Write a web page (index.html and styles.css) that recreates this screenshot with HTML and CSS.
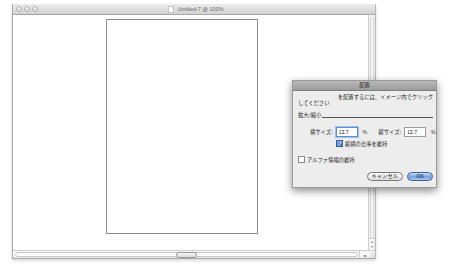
FILE: index.html
```html
<!DOCTYPE html>
<html>
<head>
  <meta charset="utf-8">
  <link rel="stylesheet" href="styles.css">
</head>

<body>
  <div class="window">
    <div class="titlebar">
      <div class="lights">
        <span class="light"></span>
        <span class="light"></span>
        <span class="light"></span>
      </div>
      <div class="title"><span class="doc"></span>Untitled-7 @ 100%</div>
    </div>
    <div class="content">
      <div class="canvas">
        <div class="page"></div>
      </div>
      <div class="vscroll">
        <div class="vtrack"></div>
        <div class="varrows"><span>▴</span><span>▾</span></div>
      </div>
    </div>
    <div class="hscroll">
      <div class="htrack"><div class="thumb"></div></div>
      <div class="harrows"><span>◂</span><span>▸</span></div>
      <div class="grow"></div>
    </div>
  </div>

  <div class="dialog">
    <div class="dlg-title">配置</div>
    <div class="dlg-body">
      <div class="msg-right">を配置するには、イメージ内でクリック</div>
      <div class="msg-left">してください</div>
      <div class="group">
        <span>拡大/縮小</span>
        <span class="rule"></span>
      </div>
      <div class="sizes">
        <label>横サイズ:</label>
        <span class="field focus">12.7</span>
        <span class="pct">%</span>
        <label class="second">縦サイズ:</label>
        <span class="field">12.7</span>
        <span class="pct">%</span>
      </div>
      <div class="check keep"><span class="box checked">✓</span>縦横の比率を維持</div>
      <div class="check"><span class="box"></span>アルファ情報の維持</div>
      <div class="buttons">
        <button class="btn">キャンセル</button>
        <button class="btn ok">OK</button>
      </div>
    </div>
  </div>
</body>
</html>
```

FILE: styles.css
```css
body {
  margin: 0;
  background: #fff;
  font-family: "Noto Sans CJK JP", "Noto Sans", sans-serif;
  width: 454px;
  height: 266px;
  position: relative;
  overflow: hidden;
}

.window {
  margin: 4px 0 0 12px;
  width: 364px;
  height: 255px;
  display: flex;
  flex-direction: column;
  border-left: 1px solid #a8a8a8;
  border-right: 1px solid #b8b8b8;
  border-bottom: 1px solid #a8a8a8;
  box-sizing: border-box;
  box-shadow: 0 2px 3px rgba(0, 0, 0, 0.15);
}

.titlebar {
  height: 10px;
  flex: none;
  position: relative;
  background: linear-gradient(#ececec, #d2d2d2);
  border-bottom: 1px solid #a8a8a8;
  display: flex;
  align-items: center;
  justify-content: center;
}

.lights {
  position: absolute;
  left: 3px;
  top: 2px;
  display: flex;
  gap: 2px;
}

.light {
  width: 4px;
  height: 4px;
  border-radius: 50%;
  border: 1px solid #b4b4b4;
  background: linear-gradient(#f6f6f6, #dadada);
}

.title {
  font-family: "Liberation Sans", sans-serif;
  font-size: 5.5px;
  color: #666;
  display: flex;
  align-items: center;
  gap: 3px;
  margin-left: 4px;
}

.doc {
  width: 4px;
  height: 5px;
  background: #fff;
  border: 1px solid #c4c4c4;
}

.content {
  flex: 1;
  display: flex;
  min-height: 0;
}

.canvas {
  flex: 1;
  background: #fff;
  padding: 4px 0 0 93px;
}

.page {
  width: 150px;
  height: 213px;
  border: 1px solid #8a8a8a;
  background: #fff;
}

.vscroll {
  width: 6px;
  display: flex;
  flex-direction: column;
  border-left: 1px solid #cfcfcf;
  background: linear-gradient(to right, #eee, #fff, #e6e6e6);
}

.vtrack {
  flex: 1;
  margin: 2px 1px 0;
  border-radius: 3px;
  border: 1px solid #d8d8d8;
  background: linear-gradient(to right, #f0f0f0, #fafafa);
}

.varrows {
  height: 11px;
  display: flex;
  flex-direction: column;
  align-items: center;
  font-size: 4px;
  line-height: 5px;
  color: #777;
  border-top: 1px solid #ccc;
}

.hscroll {
  height: 7px;
  flex: none;
  display: flex;
  border-top: 1px solid #cfcfcf;
  background: linear-gradient(#f2f2f2, #fff, #e8e8e8);
}

.htrack {
  flex: 1;
  margin: 1px 1px 1px 2px;
  border: 1px solid #c8c8c8;
  border-radius: 3px;
  background: linear-gradient(#f4f4f4, #fff);
  position: relative;
}

.thumb {
  position: absolute;
  left: 160px;
  top: -1px;
  width: 19px;
  height: 4px;
  border: 1px solid #9a9a9a;
  border-radius: 3px;
  background: linear-gradient(#fafafa, #d8d8d8);
}

.harrows {
  width: 9px;
  display: flex;
  align-items: center;
  justify-content: center;
  font-size: 4px;
  color: #777;
  border-left: 1px solid #ccc;
}

.grow {
  width: 6px;
  background: linear-gradient(135deg, #f6f6f6, #ddd);
}

.dialog {
  position: absolute;
  left: 292px;
  top: 80px;
  width: 145px;
  height: 108px;
  background: #ededed;
  border: 1px solid #999;
  box-sizing: border-box;
  box-shadow: 0 3px 8px rgba(0, 0, 0, 0.45);
  display: flex;
  flex-direction: column;
}

.dlg-title {
  height: 9px;
  flex: none;
  background: linear-gradient(#b8b8b8, #9c9c9c);
  border-bottom: 1px solid #7d7d7d;
  text-align: center;
  font-size: 5.3px;
  line-height: 9px;
  color: #222;
}

.dlg-body {
  padding: 3px 3px 0 5px;
  font-size: 5.3px;
  color: #222;
  line-height: 6px;
  white-space: nowrap;
}

.msg-right {
  text-align: right;
}

.group {
  display: flex;
  align-items: flex-end;
  margin-top: 6px;
}

.rule {
  flex: 1;
  border-bottom: 1px solid #555;
  margin: 0 0 0 1px;
}

.sizes {
  display: flex;
  align-items: center;
  margin: 9px 0 0 12px;
}

.sizes label {
  flex: none;
}

.field {
  flex: none;
  margin-left: 3px;
  background: #fff;
  border: 1px solid #999;
  font-size: 5.3px;
  line-height: 8px;
  padding-left: 2px;
  box-sizing: border-box;
  width: 22px;
  height: 10px;
}

.field.focus {
  border-color: #5d8fd6;
  box-shadow: 0 0 0 1px #9fc0ec;
}

.pct {
  margin-left: 5px;
}

.second {
  margin-left: 11px;
}

.check {
  display: flex;
  align-items: center;
  gap: 2px;
  margin-top: 9px;
}

.check.keep {
  margin: 3px 0 0 38px;
}

.box {
  width: 5px;
  height: 5px;
  border: 1px solid #888;
  background: #fff;
  font-size: 5px;
  line-height: 5px;
  text-align: center;
  color: #fff;
}

.box.checked {
  background: linear-gradient(#8fb5ea, #3d74c8);
  border-color: #3a5f9a;
}

.buttons {
  display: flex;
  justify-content: flex-end;
  gap: 4px;
  margin-top: 9px;
}

.btn {
  font-family: "Noto Sans CJK JP", sans-serif;
  font-size: 5.3px;
  height: 9px;
  line-height: 7px;
  padding: 0 4px;
  border-radius: 5px;
  border: 1px solid #777;
  background: linear-gradient(#fff, #dcdcdc);
  color: #222;
}

.btn.ok {
  width: 26px;
  border-color: #3d5f99;
  background: linear-gradient(#c9ddf6, #6fa0e0 55%, #a9caf2);
}
```
